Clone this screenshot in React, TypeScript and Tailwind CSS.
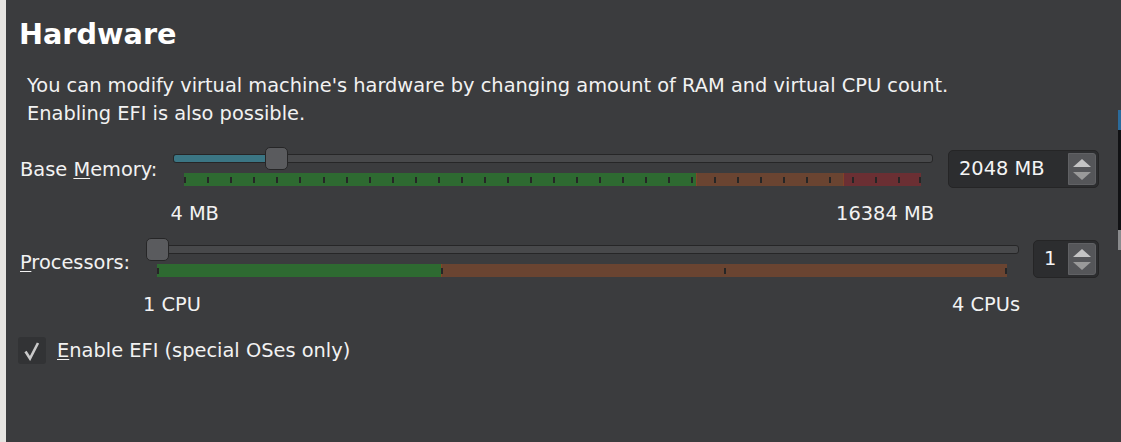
import React from "react";

const FONT = { fontFamily: '"DejaVu Sans", Tahoma, Verdana, sans-serif' };

type Segment = { color: string; from: number; to: number };

function Slider({
  frac,
  fill,
  segments,
  ticks,
  minLabel,
  maxLabel,
}: {
  frac: number;
  fill?: boolean;
  segments: Segment[];
  ticks: number[];
  minLabel: string;
  maxLabel: string;
}) {
  return (
    <div className="flex-1 flex flex-col">
      {/* track + handle */}
      <div className="relative h-[23px]">
        <div className="absolute left-0 right-0 top-[7px] h-[9px] rounded-[3px] border border-[#262627] bg-[#48494b]" />
        {fill && (
          <div
            className="absolute left-0 top-[7px] h-[9px] rounded-l-[3px] border border-[#262627] bg-[#3b7684]"
            style={{ width: `calc((100% - 23px) * ${frac} + 11px)` }}
          />
        )}
        <div
          className="absolute top-0 h-[23px] w-[23px] rounded-[5px] border border-[#262627] bg-[#5a5b5e]"
          style={{ left: `calc((100% - 23px) * ${frac})` }}
        />
      </div>
      {/* scale */}
      <div className="relative ml-[11px] mr-[12px] mt-[3px] h-[13px]">
        {segments.map((s, i) => (
          <div
            key={i}
            className="absolute top-0 h-full"
            style={{ left: `${s.from * 100}%`, width: `${(s.to - s.from) * 100}%`, background: s.color }}
          />
        ))}
        {segments.slice(1).map((s, i) => (
          <div
            key={"d" + i}
            className="absolute top-0 h-full w-px bg-[#8a4a22] opacity-70"
            style={{ left: `${s.from * 100}%` }}
          />
        ))}
        {ticks.map((t, i) => (
          <div
            key={"t" + i}
            className="absolute top-[4px] h-[6px] w-[2px] bg-[#262626]"
            style={{ left: `calc(${t * 100}% - ${t === 1 ? 2 : 0}px)` }}
          />
        ))}
      </div>
      {/* labels */}
      <div className="mt-[17px] flex justify-between text-[19.4px] leading-[22px] text-[#f2f2f2]">
        <span className="-ml-[3px]">{minLabel}</span>
        <span className="-mr-[1px]">{maxLabel}</span>
      </div>
    </div>
  );
}

function SpinBox({ value, width }: { value: string; width: string }) {
  return (
    <div
      className={`flex h-[38px] ${width} items-stretch rounded-[5px] border border-[#252526] bg-[#2c2d2f] p-[2px]`}
    >
      <div className="flex flex-1 items-center pl-[8px] text-[19.4px] text-[#f4f4f4]">{value}</div>
      <div className="flex w-[28px] flex-col items-center justify-center gap-[5px] rounded-r-[3px] border border-[#606164] bg-[#555659]">
        <div className="h-0 w-0 border-x-[9px] border-b-[8px] border-x-transparent border-b-[#c4c4c4]" />
        <div className="h-0 w-0 border-x-[9px] border-t-[8px] border-x-transparent border-t-[#9a9a9a]" />
      </div>
    </div>
  );
}

export default function App() {
  const memTicks = Array.from({ length: 33 }, (_, i) => i / 32);
  return (
    <div className="relative flex h-[442px] w-[1121px] overflow-hidden bg-[#3b3c3e]" style={FONT}>
      <div className="w-[6px] bg-[#e6e4e1]" />
      <div className="flex flex-1 flex-col pl-[13px] pr-[18px] pt-[16px]">
        <h1 className="text-[28.7px] font-bold leading-[36px] text-white">Hardware</h1>
        <div className="mt-[20px] pl-[8px] text-[19.4px] leading-[28px] text-[#f2f2f2]">
          <div>
            You can modify virtual machine's hardware by changing amount of RAM and virtual CPU count.
          </div>
          <div>Enabling EFI is also possible.</div>
        </div>

        {/* Base memory */}
        <div className="mt-[19px] flex items-start">
          <div className="mt-[11px] pl-[1px] text-[19.4px] leading-[24px] text-[#f2f2f2]">
            Base <span className="underline underline-offset-2">M</span>emory:
          </div>
          <div className="ml-[16px] flex flex-1 items-start">
            <Slider
              frac={0.1248}
              fill
              segments={[
                { color: "#2e6a31", from: 0, to: 0.695 },
                { color: "#6a4431", from: 0.695, to: 0.894 },
                { color: "#6b2f33", from: 0.894, to: 1 },
              ]}
              ticks={memTicks}
              minLabel="4 MB"
              maxLabel="16384 MB"
            />
            <div className="ml-[15px] mt-[3px]">
              <SpinBox value="2048 MB" width="w-[151px]" />
            </div>
          </div>
        </div>

        {/* Processors */}
        <div className="mt-[13px] flex items-start">
          <div className="mt-[13px] pl-[1px] text-[19.4px] leading-[24px] text-[#f2f2f2]">
            <span className="underline underline-offset-2">P</span>rocessors:
          </div>
          <div className="ml-[16px] flex flex-1 items-start">
            <Slider
              frac={0}
              segments={[
                { color: "#2e6a31", from: 0, to: 0.334 },
                { color: "#6a4431", from: 0.334, to: 1 },
              ]}
              ticks={[0, 0.334, 0.667, 1]}
              minLabel="1 CPU"
              maxLabel="4 CPUs"
            />
            <div className="ml-[14px] mt-[2px]">
              <SpinBox value="1" width="w-[66px]" />
            </div>
          </div>
        </div>

        {/* EFI */}
        <div className="mt-[20px] flex items-center">
          <div className="-ml-[1px] flex h-[27px] w-[28px] items-center justify-center rounded-[3px] bg-[#323335]">
            <svg width="18" height="20" viewBox="0 0 18 20">
              <path d="M2.5 10.5 L7 17.5 L15 2" fill="none" stroke="#c9c9c9" strokeWidth="2.6" />
            </svg>
          </div>
          <div className="ml-[11px] text-[19.4px] text-[#f2f2f2]">
            <span className="underline underline-offset-2">E</span>nable EFI (special OSes only)
          </div>
        </div>
      </div>
      <div className="w-[4px] bg-[#3b3c3e]" />
      <div className="absolute right-0 top-[110px] flex w-[3px] flex-col">
        <div className="h-[20px] bg-[#2a6b9c]" />
        <div className="h-[100px] bg-[#111214]" />
        <div className="h-[20px] bg-[#8a8b8d]" />
      </div>
    </div>
  );
}
